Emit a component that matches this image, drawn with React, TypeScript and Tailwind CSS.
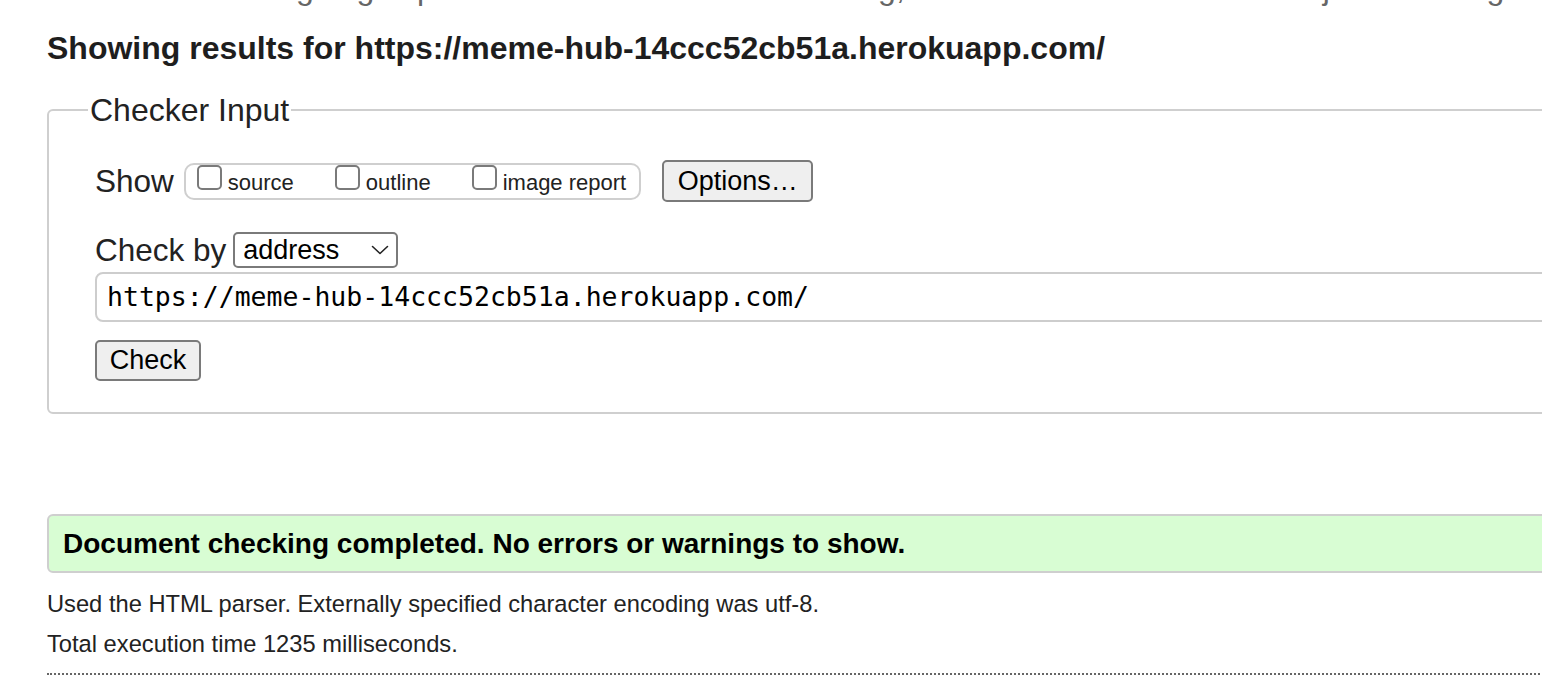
import React from "react";

function Checkbox() {
  return (
    <span className="inline-block w-[25px] h-[25px] border-2 border-[#7a7a7a] rounded-[5px] bg-white box-border" />
  );
}

function CheckLabel({ text }: { text: string }) {
  return (
    <span className="flex items-baseline">
      <Checkbox />
      <span className="ml-[6px] text-[22px] leading-[25px]">{text}</span>
    </span>
  );
}

export default function App() {
  return (
    <div className="w-[1542px] h-[698px] overflow-hidden bg-white text-[#222] font-['Liberation_Sans',Arial,sans-serif]">
      <div className="h-[6px] overflow-hidden">
        <div className="mt-[-28px] ml-[54px] whitespace-nowrap text-[32px] leading-[32px] text-[#666]">
          This tool is an ongoing experiment in better HTML checking, and its behavior remains subject to change
        </div>
      </div>

      <h2 className="mt-[24px] ml-[47px] whitespace-nowrap text-[32px] leading-[37px] font-bold text-[#1e1e1e]">
        Showing results for https://meme-hub-14ccc52cb51a.herokuapp.com/
      </h2>

      <fieldset className="mt-[25px] ml-[47px] w-[1620px] border-2 border-[#cfcfcf] rounded-[6px] pl-[46px] pt-[32px] pb-[31px] pr-[46px]">
        <legend className="ml-[-7px] px-[2px] text-[32px] leading-[36px] text-[#222]">Checker Input</legend>

        <div className="flex items-center h-[42px]">
          <span className="text-[31.5px] leading-[37px]">Show</span>
          <div className="ml-[10px] flex items-start gap-[41px] h-[37px] border-2 border-[#cfcfcf] rounded-[10px] pl-[11px] pr-[13px] box-border">
            <CheckLabel text="source" />
            <CheckLabel text="outline" />
            <CheckLabel text="image report" />
          </div>
          <button className="ml-[21px] w-[151px] h-[42px] border-2 border-[#7a7a7a] rounded-[5px] bg-[#efefef] text-[27px] text-black leading-none">
            Options…
          </button>
        </div>

        <div className="mt-[30px] flex items-center h-[36px]">
          <span className="text-[31.5px] leading-[37px]">Check by</span>
          <div className="ml-[7px] w-[165px] h-[36px] border-2 border-[#7a7a7a] rounded-[5px] flex items-center justify-between pl-[8px] pr-[7px] box-border">
            <span className="text-[27px] leading-none text-black">address</span>
            <svg width="18" height="10" viewBox="0 0 18 10" fill="none">
              <path d="M1.5 1.5 L9 8.5 L16.5 1.5" stroke="#222" strokeWidth="1.6" strokeLinecap="round" strokeLinejoin="round" />
            </svg>
          </div>
        </div>

        <div className="mt-[4px] h-[50px] border-2 border-[#cdcdcd] rounded-[8px] flex items-center pl-[10px] box-border">
          <span className="font-['DejaVu_Sans_Mono',monospace] text-[26.5px] leading-none text-black whitespace-nowrap">
            https://meme-hub-14ccc52cb51a.herokuapp.com/
          </span>
        </div>

        <button className="mt-[18px] block w-[106px] h-[41px] border-2 border-[#7a7a7a] rounded-[5px] bg-[#efefef] text-[27px] text-black leading-none">
          Check
        </button>
      </fieldset>

      <div className="mt-[100px] ml-[47px] w-[1620px] h-[59px] border-2 border-[#cfcfcf] rounded-[6px] bg-[#d8fdd3] flex items-center pl-[14px] box-border">
        <span className="text-[28px] font-bold text-black whitespace-nowrap">
          Document checking completed. No errors or warnings to show.
        </span>
      </div>

      <p className="mt-[17px] ml-[47px] text-[23.7px] leading-[28px] text-[#222] whitespace-nowrap">
        Used the HTML parser. Externally specified character encoding was utf-8.
      </p>
      <p className="mt-[12px] ml-[47px] text-[23.7px] leading-[28px] text-[#222] whitespace-nowrap">
        Total execution time 1235 milliseconds.
      </p>
      <div className="mt-[15px] ml-[47px] w-[1620px] border-t-2 border-dotted border-[#666]" />
    </div>
  );
}
